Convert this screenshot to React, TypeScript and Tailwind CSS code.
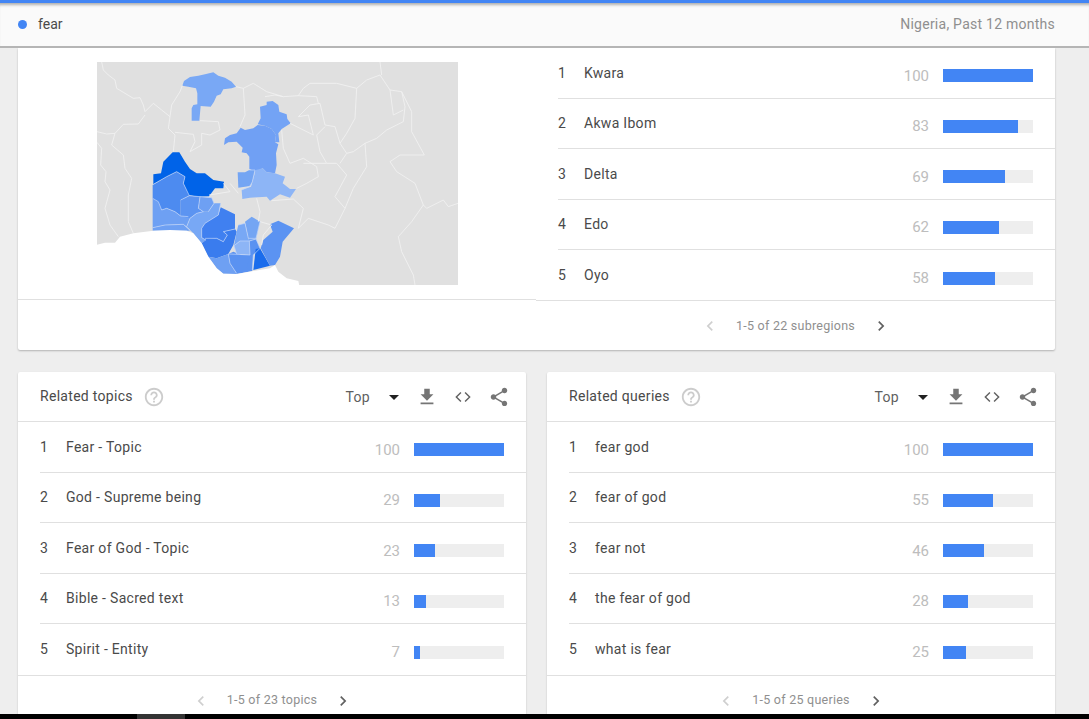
// Google Trends "interest by subregion" page, cut off at the window height.
import React from "react";

type Row = { name: string; value: number };

const SUBREGIONS: Row[] = [
  { name: "Kwara", value: 100 },
  { name: "Akwa Ibom", value: 83 },
  { name: "Delta", value: 69 },
  { name: "Edo", value: 62 },
  { name: "Oyo", value: 58 },
];

const TOPICS: Row[] = [
  { name: "Fear - Topic", value: 100 },
  { name: "God - Supreme being", value: 29 },
  { name: "Fear of God - Topic", value: 23 },
  { name: "Bible - Sacred text", value: 13 },
  { name: "Spirit - Entity", value: 7 },
];

const QUERIES: Row[] = [
  { name: "fear god", value: 100 },
  { name: "fear of god", value: 55 },
  { name: "fear not", value: 46 },
  { name: "the fear of god", value: 28 },
  { name: "what is fear", value: 25 },
];

// Shaded states, in 3x coordinates of the crop that starts at (90,55)
const STATES: { d: string; fill: string }[] = [
  { fill: "#79a8f5", d: "M277,92 L282,78 L300,66 L325,62 L345,58 L370,52 L385,62 L405,68 L425,80 L438,95 L425,100 L400,103 L392,118 L380,122 L372,140 L362,155 L332,153 L328,197 L305,197 L305,160 L310,150 L322,148 L322,115 L318,100 L295,95 Z" },
  { fill: "#73a3f5", d: "M510,155 L530,150 L530,140 L548,138 L565,150 L568,170 L590,178 L592,192 L602,205 L575,222 L565,235 L568,262 L555,262 L558,240 L545,222 L525,212 L503,208 L512,190 Z" },
  { fill: "#70a0f4", d: "M402,270 L405,250 L420,240 L440,235 L452,218 L465,225 L490,220 L503,210 L525,212 L545,222 L558,240 L555,262 L565,268 L558,295 L560,330 L555,355 L530,352 L518,340 L498,350 L478,342 L478,305 L470,295 L455,292 L458,278 L440,260 L415,262 Z" },
  { fill: "#74a5f3", d: "M443,352 L465,352 L478,345 L495,345 L487,380 L480,393 L445,398 Z" },
  { fill: "#8db5f6", d: "M497,345 L518,340 L530,352 L555,355 L585,365 L578,385 L600,402 L618,402 L600,428 L570,418 L540,437 L530,425 L480,428 L457,432 L455,405 L483,395 Z" },
  { fill: "#0063e8", d: "M190,358 L213,355 L220,320 L248,292 L268,292 L285,320 L300,342 L320,355 L345,355 L370,375 L402,380 L400,400 L375,400 L357,424 L325,425 L295,420 L280,385 L285,365 L260,350 L230,365 L190,388 Z" },
  { fill: "#4d8bf0", d: "M188,390 L230,365 L260,350 L285,365 L280,385 L298,422 L272,435 L272,483 L255,470 L230,460 L215,465 L188,430 Z" },
  { fill: "#6ea0f3", d: "M188,430 L205,440 L215,465 L230,460 L255,470 L272,483 L295,485 L300,490 L290,515 L280,508 L225,510 L188,518 Z" },
  { fill: "#6ea0f3", d: "M188,518 L225,510 L280,508 L300,527 L240,527 L188,527 Z" },
  { fill: "#5c94f1", d: "M272,435 L298,422 L330,425 L325,460 L340,470 L320,475 L300,490 L272,483 Z" },
  { fill: "#6ea0f3", d: "M330,425 L365,428 L372,445 L355,470 L340,470 L325,460 Z" },
  { fill: "#78a8f5", d: "M372,445 L392,445 L385,480 L345,505 L335,520 L335,548 L348,555 L335,565 L310,535 L290,515 L300,490 L320,475 L340,470 L355,470 Z" },
  { fill: "#4080f0", d: "M392,457 L435,478 L435,522 L400,530 L412,540 L400,560 L380,550 L345,550 L335,548 L335,520 L345,505 L385,480 Z" },
  { fill: "#3a7cee", d: "M335,548 L380,550 L400,560 L412,540 L400,530 L435,522 L440,530 L430,570 L415,597 L380,610 L355,605 L335,565 L348,555 Z" },
  { fill: "#6ea0f3", d: "M355,605 L380,610 L415,597 L420,625 L440,657 L400,656 L380,640 Z" },
  { fill: "#5a92f1", d: "M415,597 L430,590 L455,600 L480,600 L487,648 L440,657 L420,625 Z" },
  { fill: "#8db5f6", d: "M432,572 L450,558 L478,558 L480,600 L440,598 Z" },
  { fill: "#78a8f5", d: "M445,510 L465,505 L475,550 L478,558 L450,558 L432,572 L440,530 Z" },
  { fill: "#74a5f3", d: "M465,500 L485,485 L510,500 L498,552 L478,558 L475,550 Z" },
  { fill: "#5a92f1", d: "M478,558 L498,552 L510,580 L490,600 L487,645 L470,640 L480,600 Z" },
  { fill: "#1a6cec", d: "M497,582 L510,580 L540,632 L490,645 Z" },
  { fill: "#5b93f2", d: "M540,508 L565,497 L612,520 L578,560 L570,605 L555,630 L540,632 L512,580 L520,555 L548,530 Z" },
];

const BORDERS =
  "M35,21 L40,45 L55,60 L75,75 L80,100 L100,112 L130,130 L150,128 L160,150 L165,170 L190,145 L215,165 L240,185 " +
  "M277,92 L270,110 L245,150 L240,185 L235,220 L255,240 L250,290 " +
  "M21,230 L50,237 L75,235 L100,208 L145,207 L165,180 " +
  "M75,235 L65,270 L100,300 L105,340 L125,370 L115,420 L115,500 L130,535 " +
  "M21,262 L35,280 L32,330 L48,350 L45,380 L60,405 L45,460 L60,510 L85,545 " +
  "M255,232 L310,238 L315,260 L300,290 L335,270 L335,235 L360,240 L390,225 L385,200 L330,197 " +
  "M438,95 L460,100 L490,85 L530,110 L580,125 L625,122 L640,100 L660,85 L740,85 L800,100 L830,75 L870,60 L900,105 L910,180 L940,165 " +
  "M460,100 L465,180 L450,215 M870,21 L875,60 " +
  "M800,100 L795,190 L770,235 L750,265 L770,295 " +
  "M900,105 L935,110 L945,155 L940,200 L890,225 L860,250 L825,265 L790,290 L770,295 L750,325 " +
  "M935,110 L965,170 L965,230 L1003,300 L930,300 L900,320 L920,350 L975,385 L1000,450 L965,500 L925,545 L935,590 L970,660 L975,690 " +
  "M1000,450 L1010,460 L1060,435 L1075,455 L1104,445 " +
  "M600,205 L640,225 L670,240 L655,180 L625,185 L660,150 L690,145 L705,210 L735,215 L750,265 " +
  "M525,125 L555,120 L580,125 M625,122 L680,125 L685,145 " +
  "M705,215 L680,240 L690,290 L710,325 L740,325 L770,360 L735,425 L765,460 L790,400 L830,335 L825,265 " +
  "M575,225 L580,280 L600,325 L640,310 L680,335 L685,365 L650,385 L620,400 " +
  "M710,325 L640,325 M500,430 L510,470 L505,500 " +
  "M545,437 L610,432 L640,460 L625,520 L655,490 L715,510 L735,520 L765,460 " +
  "M357,420 L420,410 L400,385 M420,385 L445,415 " +
  "M510,500 L545,510 L520,540 L515,570";

const INNER_BORDERS =
  "M190,388 L230,365 L260,350 L285,365 L280,385 L298,422 M188,430 L205,440 L215,465 L230,460 L255,470 L272,483 L295,485 " +
  "M272,435 L298,422 L330,425 L325,460 L340,470 L320,475 L300,490 L290,515 M330,425 L365,428 L372,445 L355,470 " +
  "M188,518 L225,510 L280,508 L300,525 M385,480 L345,505 L335,520 L335,548 L348,555 M345,550 L380,550 L400,560 L412,540 L400,530 L435,522 " +
  "M392,445 L385,480 M415,597 L420,625 L440,655 M432,572 L450,558 L478,558 L480,600 L440,598 L432,572 " +
  "M445,510 L465,505 L475,550 L498,550 L510,500 M478,558 L498,552 L510,580 L490,600 L487,645 " +
  "M478,345 L495,345 L487,380 L480,393 L455,405 M415,597 L440,598";

function NigeriaMap() {
  return (
    <div className="h-[223px] w-[361px] overflow-hidden">
      <svg width="361" height="223" viewBox="21 21 1083 669" className="block blur-[0.3px]">
        <rect x="19" y="19" width="1087" height="673" fill="#e0e0e0" />
        {STATES.map((s) => (
          <path key={s.d} d={s.d} fill={s.fill} />
        ))}
        <path d={BORDERS} fill="none" stroke="#f2f2f2" strokeWidth="2.4" strokeLinejoin="round" />
        <path d={INNER_BORDERS} fill="none" stroke="#c4d8fa" strokeWidth="2" strokeLinejoin="round" />
        <path
          d="M19,570 L45,563 L75,563 L90,545 L130,535 L190,527 L240,525 L290,527 L310,535 L335,565 L355,605 L380,640 L400,656 L440,657 L490,648 L540,640 L555,630 L565,650 L590,670 L625,678 L628,692 L19,692 Z"
          fill="#ffffff"
        />
      </svg>
    </div>
  );
}

function Chevron({ left, muted }: { left?: boolean; muted?: boolean }) {
  return (
    <svg width="20" height="20" viewBox="0 0 24 24" fill={muted ? "#cfcfcf" : "#616161"} className={left ? "rotate-180" : ""}>
      <path d="M8.59 16.59L13.17 12 8.59 7.41 10 6l6 6-6 6z" />
    </svg>
  );
}

function Pager({ label }: { label: string }) {
  return (
    <div className="flex items-center justify-center gap-[16px] pt-[15px]">
      <Chevron left muted />
      <span className="text-[12.5px] tracking-[0.25px] text-[#8f8f8f]">{label}</span>
      <Chevron />
    </div>
  );
}

function RowItem({ index, row, last }: { index: number; row: Row; last?: boolean }) {
  return (
    <div className={`ml-[22px] flex h-[50.5px] items-center pt-[5.5px] pr-[22px] ${last ? "" : "border-b border-[#e0e0e0]"}`}>
      <span className="mb-[5px] w-[26px] text-[14px] text-[#4a4a4a]">{index}</span>
      <span className="mb-[5px] flex-1 text-[14px] tracking-[0.3px] text-[#4a4a4a]">{row.name}</span>
      <span className="mt-[1px] mr-[14px] text-[15px] text-[#bdbdbd]">{row.value}</span>
      <div className="h-[13px] w-[90px] bg-[#eeeeee]">
        <div className="h-full bg-[#4285f4]" style={{ width: `${row.value}%` }} />
      </div>
    </div>
  );
}

function RelatedCard({ title, rows, pager }: { title: string; rows: Row[]; pager: string }) {
  return (
    <section className="flex-1 rounded-t-[2px] bg-white shadow-[0_1px_2px_rgba(0,0,0,0.2)]">
      <header className="flex h-[50px] items-center border-b border-[#e0e0e0] pr-[16px] pl-[22px]">
        <span className="text-[14px] tracking-[0.3px] text-[#4a4a4a]">{title}</span>
        <svg width="22" height="22" viewBox="0 0 24 24" fill="#cccccc" className="ml-[10px]">
          <path d="M11 18h2v-2h-2v2zm1-16C6.48 2 2 6.48 2 12s4.48 10 10 10 10-4.48 10-10S17.52 2 12 2zm0 18c-4.41 0-8-3.59-8-8s3.59-8 8-8 8 3.59 8 8-3.59 8-8 8zm0-14c-2.21 0-4 1.79-4 4h2c0-1.1.9-2 2-2s2 .9 2 2c0 2-3 1.75-3 5h2c0-2.25 3-2.5 3-5 0-2.21-1.79-4-4-4z" />
        </svg>
        <span className="mt-[1px] ml-auto text-[14px] tracking-[0.3px] text-[#5f5f5f]">Top</span>
        <span className="mt-[2px] ml-[19px] h-0 w-0 border-x-[5px] border-t-[5px] border-x-transparent border-t-[#212121]" />
        <svg width="22" height="22" viewBox="0 0 24 24" fill="#757575" className="ml-[17px]">
          <path d="M19 9h-4V3H9v6H5l7 7 7-7zM5 18v2h14v-2H5z" />
        </svg>
        <svg width="20" height="20" viewBox="0 0 24 24" fill="none" stroke="#616161" strokeWidth="1.7" className="ml-[15px]">
          <path d="M9.5 6.5L4 12l5.5 5.5M14.5 6.5L20 12l-5.5 5.5" />
        </svg>
        <svg width="22" height="22" viewBox="0 0 24 24" fill="#757575" className="ml-[15px]">
          <path d="M18 16.08c-.76 0-1.44.3-1.96.77L8.91 12.7c.05-.23.09-.46.09-.7s-.04-.47-.09-.7l7.05-4.11c.54.5 1.25.81 2.04.81 1.66 0 3-1.34 3-3s-1.34-3-3-3-3 1.34-3 3c0 .24.04.47.09.7L8.04 9.81C7.5 9.31 6.79 9 6 9c-1.66 0-3 1.34-3 3s1.34 3 3 3c.79 0 1.5-.31 2.04-.81l7.12 4.16c-.05.21-.08.43-.08.65 0 1.61 1.31 2.92 2.92 2.92 1.61 0 2.92-1.31 2.92-2.92s-1.31-2.92-2.92-2.92z" />
        </svg>
      </header>
      <div className="border-b border-[#e0e0e0]">
        {rows.map((r, i) => (
          <RowItem key={r.name} index={i + 1} row={r} last={i === rows.length - 1} />
        ))}
      </div>
      <Pager label={pager} />
    </section>
  );
}

export default function App() {
  return (
    <div className="flex h-[719px] flex-col overflow-hidden bg-[#eeeeee] font-['Roboto',sans-serif]">
      <div className="relative z-10 h-[48px] shrink-0 border-t-[3px] border-b-2 border-t-[#4285f4] border-b-[#b5b5b5] bg-[#fafafa] shadow-[inset_0_4px_3px_-2px_rgba(0,0,0,0.3)]">
        <div className="flex h-full items-center pr-[34px] pl-[18px]">
          <span className="h-[9px] w-[9px] rounded-full bg-[#4285f4]" />
          <span className="ml-[11px] text-[14px] text-[#4a4a4a]">fear</span>
          <span className="ml-auto text-[14px] tracking-[0.25px] text-[#8f8f8f]">Nigeria, Past 12 months</span>
        </div>
      </div>

      <div className="min-h-0 flex-1 overflow-hidden px-[18px] pr-[34px]">
        <section className="flex h-[302px] rounded-b-[2px] bg-white shadow-[0_1px_2px_rgba(0,0,0,0.25)]">
          <div className="w-[518px] shrink-0">
            <div className="h-[252px] border-b border-[#e0e0e0] pt-[14px] pl-[79px]">
              <NigeriaMap />
            </div>
          </div>
          <div className="flex-1">
            <div className="h-[253px] border-b border-[#e0e0e0]">
              {SUBREGIONS.map((r, i) => (
                <RowItem key={r.name} index={i + 1} row={r} last={i === SUBREGIONS.length - 1} />
              ))}
            </div>
            <Pager label="1-5 of 22 subregions" />
          </div>
        </section>

        <div className="mt-[22px] flex h-[400px] gap-[21px]">
          <RelatedCard title="Related topics" rows={TOPICS} pager="1-5 of 23 topics" />
          <RelatedCard title="Related queries" rows={QUERIES} pager="1-5 of 25 queries" />
        </div>
      </div>

      <div className="flex h-[5px] shrink-0 bg-black">
        <div className="ml-[137px] w-[48px] bg-[#333333]" />
      </div>
    </div>
  );
}
